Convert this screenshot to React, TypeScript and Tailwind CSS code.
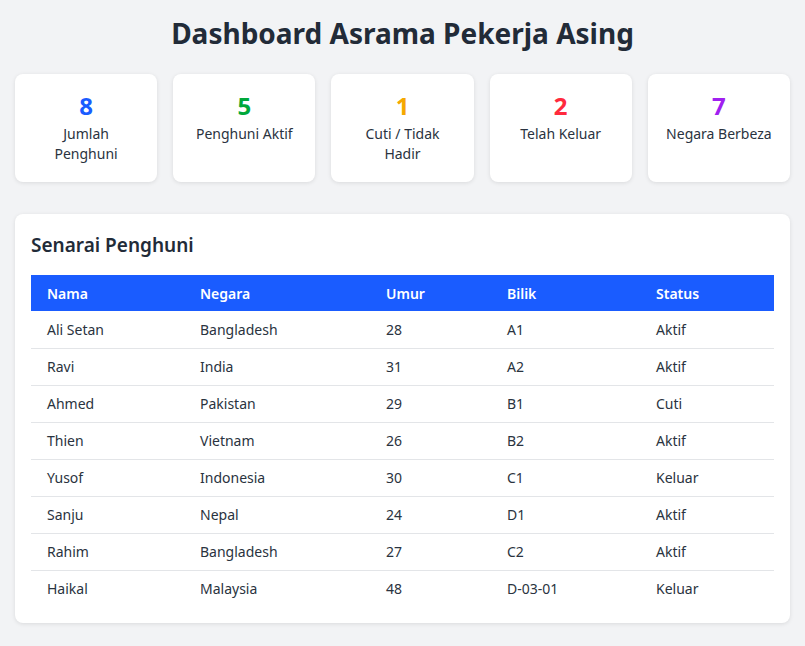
const stats = [
  { value: "8", label: "Jumlah Penghuni", color: "text-[#1a5cff]" },
  { value: "5", label: "Penghuni Aktif", color: "text-[#00a83a]" },
  { value: "1", label: "Cuti / Tidak Hadir", color: "text-[#f5a800]" },
  { value: "2", label: "Telah Keluar", color: "text-[#ff2a3d]" },
  { value: "7", label: "Negara Berbeza", color: "text-[#a020f0]" },
];

const rows = [
  ["Ali Setan", "Bangladesh", "28", "A1", "Aktif"],
  ["Ravi", "India", "31", "A2", "Aktif"],
  ["Ahmed", "Pakistan", "29", "B1", "Cuti"],
  ["Thien", "Vietnam", "26", "B2", "Aktif"],
  ["Yusof", "Indonesia", "30", "C1", "Keluar"],
  ["Sanju", "Nepal", "24", "D1", "Aktif"],
  ["Rahim", "Bangladesh", "27", "C2", "Aktif"],
  ["Haikal", "Malaysia", "48", "D-03-01", "Keluar"],
];

const cols = ["w-[153px]", "w-[186px]", "w-[121px]", "w-[149px]", ""];

export default function App() {
  return (
    <div className="min-h-[646px] bg-[#f2f3f5] px-[15px] pt-[14px] pb-[26px] text-[#222b38] font-['Inter',sans-serif]">
      <h1 className="text-center text-[28px] font-bold leading-[38px]">Dashboard Asrama Pekerja Asing</h1>
      <div className="mt-[22px] grid grid-cols-5 gap-4">
        {stats.map((s) => (
          <div key={s.label} className="h-[108px] rounded-lg bg-white shadow-[0_1px_4px_rgba(0,0,0,0.1)] px-4 pt-[17px] text-center">
            <div className={`text-[24px] font-bold leading-[30px] ${s.color}`}>{s.value}</div>
            <div className="mt-[3px] text-[14px] leading-[20px] text-[#2a3340]">{s.label}</div>
          </div>
        ))}
      </div>
      <div className="mt-[32px] rounded-lg bg-white shadow-[0_1px_4px_rgba(0,0,0,0.1)] px-4 pt-[18px] pb-4">
        <h2 className="text-[19px] font-semibold leading-[26px]">Senarai Penghuni</h2>
        <table className="mt-[17px] w-full border-collapse text-[14px]">
          <thead>
            <tr className="bg-[#1a5cff] text-white">
              {["Nama", "Negara", "Umur", "Bilik", "Status"].map((h, i) => (
                <th key={h} className={`h-[36px] px-4 text-left font-semibold ${cols[i]}`}>{h}</th>
              ))}
            </tr>
          </thead>
          <tbody>
            {rows.map((r, i) => (
              <tr key={r[0]} className={i < rows.length - 1 ? "border-b border-[#e3e5e8]" : ""}>
                {r.map((c, j) => (
                  <td key={j} className="h-[37px] px-4 text-[#2a3340]">{c}</td>
                ))}
              </tr>
            ))}
          </tbody>
        </table>
      </div>
    </div>
  );
}
